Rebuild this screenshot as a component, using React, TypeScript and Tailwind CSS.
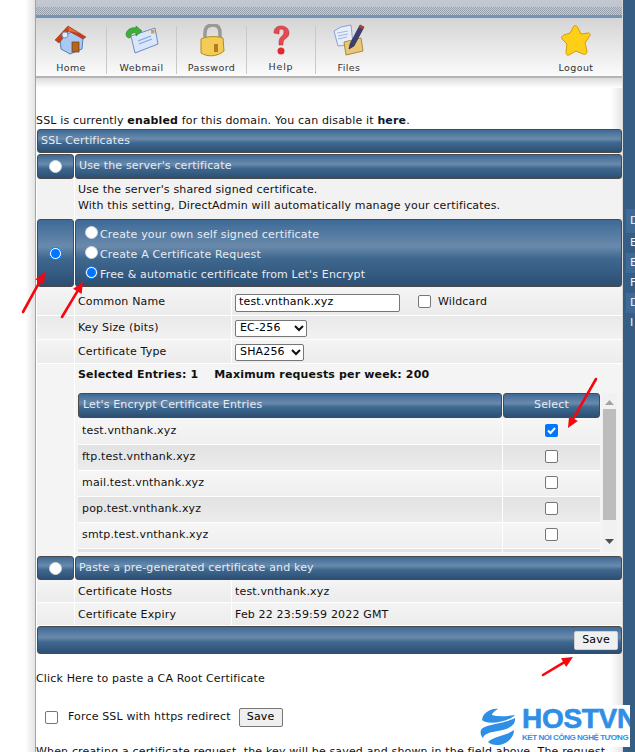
const bar = "bg-[linear-gradient(#3d6a97_0%,#6a8aab_40%,#3f6890_58%,#2c4f73_100%)] border border-[#4a4a4a] rounded-[3px] text-[#e6ecf2]";

function HomeIcon() {
  return (
    <svg width="34" height="30" viewBox="0 0 34 30">
      <path d="M6 14 L17 7 L29 13 L28 24 L16 29 L7 24 Z" fill="#a9c8f2" stroke="#5a7fb5" />
      <path d="M1 15 L14 1 L32 12 L29 14 L15 6 L5 18 Z" fill="#c8401a" stroke="#8a2a10" strokeWidth="0.5" />
      <path d="M14 2 L25 8 L15 6 Z" fill="#e2703a" />
      <circle cx="11" cy="10" r="3" fill="#dfe8f5" stroke="#7f93ad" />
      <rect x="18" y="17" width="7" height="10" fill="#b5651d" stroke="#6e3d12" strokeWidth="0.7" />
    </svg>
  );
}

function MailIcon() {
  return (
    <svg width="34" height="28" viewBox="0 0 34 28">
      <path d="M6 10 L30 2 L33 18 L10 27 Z" fill="#d9e6fb" stroke="#6d8cc4" />
      <path d="M13 15 L26 10 M14 18 L27 13" stroke="#7fa4dc" strokeWidth="1.2" />
      <rect x="26" y="4" width="3.5" height="3.5" fill="#d89a4a" />
      <path d="M1 8 C2 3 7 1 11 2 L11 0 L17 5 L11 10 L11 7 C8 6 6 7 5 12 C3 12 1 11 1 8 Z" fill="#3fae3a" stroke="#2b7d28" strokeWidth="0.6" />
    </svg>
  );
}

function LockIcon() {
  return (
    <svg width="26" height="33" viewBox="0 0 26 33">
      <path d="M6 15 V9 C6 3 9 1 14 1 C19 1 21 4 21 9 V15" fill="none" stroke="#9a9a92" strokeWidth="3.5" />
      <path d="M2 15 C8 12 18 12 24 14 L25 27 C18 33 8 33 2 29 Z" fill="#f4cb55" stroke="#b38a22" />
      <path d="M15 20 h4 v8 h-4 z" fill="#b27d1f" />
    </svg>
  );
}

function HelpIcon() {
  return (
    <svg width="18" height="30" viewBox="0 0 18 30">
      <path d="M2 8 C2 3 5 1 9 1 C14 1 17 4 17 8 C17 12 14 13 12 15 C11 16 11 18 11 20 L7 20 C7 16 7 14 9 12 C11 10 12 9 12 7 C12 5 11 4 9 4 C7 4 7 6 7 9 Z" fill="#e8484f" stroke="#b33a40" strokeWidth="0.6" />
      <circle cx="9" cy="26" r="3.5" fill="#e02a33" />
    </svg>
  );
}

function FilesIcon() {
  return (
    <svg width="32" height="32" viewBox="0 0 32 32">
      <path d="M1 7 L8 3 L18 1 L20 20 L5 22 Z" fill="#e8effb" stroke="#87a3d3" />
      <path d="M4 9 L15 7 M5 12 L15 10 M5 15 L14 13" stroke="#9db7e3" />
      <path d="M11 18 L28 14 L30 27 L13 31 Z" fill="#e8c878" stroke="#a98a3d" />
      <path d="M17 20 L27 1 L31 3 L21 22 L16 25 Z" fill="#3b3f73" stroke="#20234a" strokeWidth="0.6" />
      <path d="M26 3 L27 1 L31 3 L30 5 Z" fill="#c8401a" />
    </svg>
  );
}

function StarIcon() {
  return (
    <svg width="30" height="33" viewBox="0 0 30 33">
      <path d="M13 2 C15 1 16 2 17 4 L20 10 L27 9 C29 9 30 11 28 13 L24 19 L26 27 C26 30 24 31 22 30 L15 27 L8 31 C6 32 5 30 5 28 L6 20 L1 15 C0 13 1 12 3 11 L9 9 Z" fill="#fdd017" stroke="#d99a0c" />
    </svg>
  );
}

function NavItem({ label, icon, w, line = true, tight = false }: { label: string; icon: React.ReactNode; w: string; line?: boolean; tight?: boolean }) {
  return (
    <div className={`${w} h-[48px] flex flex-col items-center justify-end text-[#333] text-[9.5px] ${tight ? "tracking-[0.8px]" : "tracking-[0.4px]"} ${line ? "border-r border-[#c9c9c9]" : ""}`}>
      <div className="h-[36px] flex items-center justify-center -translate-y-[2px]">{icon}</div>
      <div className={`leading-[12px] ${tight ? "mb-[1px]" : "mb-0"} mt-[3px]`}>{label}</div>
    </div>
  );
}

function Radio({ on = false }: { on?: boolean }) {
  return (
    <span className={`inline-block w-[13px] h-[13px] rounded-full shrink-0 ${on ? "border-[1.5px] border-[#0075ff] bg-white p-[1px]" : "bg-white border border-[#cfd6dd]"}`}>
      {on && <span className="block w-full h-full rounded-full bg-[#0075ff]" />}
    </span>
  );
}

function Check({ on = false }: { on?: boolean }) {
  if (on) {
    return (
      <span className="w-[13px] h-[13px] rounded-[2px] bg-[#0075ff] flex items-center justify-center">
        <svg width="11" height="11" viewBox="0 0 11 11"><path d="M2 5.5 L4.5 8 L9 3" fill="none" stroke="#fff" strokeWidth="2" /></svg>
      </span>
    );
  }
  return <span className="w-[13px] h-[13px] rounded-[2px] bg-white border border-[#767676] block" />;
}

function Select({ value, w }: { value: string; w: string }) {
  return (
    <span className={`${w} h-[17px] border border-[#767676] rounded-[2px] bg-white flex items-center justify-between pl-[4px] pr-[2px] text-black`}>
      {value}
      <svg width="10" height="7" viewBox="0 0 10 7"><path d="M1 1 L5 5 L9 1" fill="none" stroke="#111" strokeWidth="2" /></svg>
    </span>
  );
}

function FormRow({ label, h, children, alt, low }: { label: string; h: string; children: React.ReactNode; alt?: boolean; low?: boolean }) {
  const cellTop = low ? "pt-[3px]" : "pt-[1px]";
  return (
    <div className={`flex ${h} border-b border-white ${alt ? "bg-[linear-gradient(#e9e9e9,#f2f2f2)]" : "bg-[linear-gradient(#f4f4f4,#ececec)]"}`}>
      <div className="w-[38px] border-r border-white" />
      <div className={`w-[157px] pl-[3px] ${cellTop} flex items-center border-r border-white`}>{label}</div>
      <div className={`flex-1 pl-[3px] ${cellTop} flex items-center`}>{children}</div>
    </div>
  );
}

function EntryRow({ name, on, alt }: { name: string; on?: boolean; alt?: boolean }) {
  return (
    <div className={`flex h-[26px] shrink-0 border-b border-white ${alt ? "bg-[linear-gradient(#e2e2e2,#ececec)]" : "bg-[linear-gradient(#f6f6f6,#efefef)]"}`}>
      <div className="w-[425px] pl-[4px] flex items-center border-r border-white">{name}</div>
      <div className="flex-1 flex items-center justify-center pb-[3px]"><Check on={on} /></div>
    </div>
  );
}

function Arrow({ className, x1, y1, x2, y2, w, h }: { className: string; x1: number; y1: number; x2: number; y2: number; w: number; h: number }) {
  const a = Math.atan2(y2 - y1, x2 - x1);
  const bx = x2 - Math.cos(a) * 11;
  const by = y2 - Math.sin(a) * 11;
  const px = -Math.sin(a) * 5;
  const py = Math.cos(a) * 5;
  return (
    <svg className={`absolute ${className}`} width={w} height={h} viewBox={`0 0 ${w} ${h}`}>
      <line x1={x1} y1={y1} x2={bx} y2={by} stroke="#f5070f" strokeWidth="2.6" strokeLinecap="round" />
      <polygon points={`${x2},${y2} ${bx + px},${by + py} ${bx - px},${by - py}`} fill="#f5070f" />
    </svg>
  );
}

export default function App() {
  return (
    <div className="relative w-[635px] h-[752px] overflow-hidden bg-white flex text-[11px] tracking-[0.16px] text-[#111] font-['DejaVu_Sans','Liberation_Sans',sans-serif]">
      <div className="w-[36px] shrink-0 bg-[linear-gradient(90deg,#fff_70%,#e4e4e4_97%,#8fa6bf_97%)]" />

      <div className="w-[586px] shrink-0 self-stretch flex flex-col overflow-visible bg-[linear-gradient(90deg,#fff_98%,#e6e6e6)]">
        <div className="h-[18px] shrink-0 bg-[linear-gradient(#c3c7d0,#bcc1cb)] flex flex-col justify-end">
          <div className="h-[8px] bg-[repeating-conic-gradient(#98a1ae_0_25%,#c3c7d0_0_50%)] bg-[length:2px_2px]" />
          <div className="h-[3px] bg-[#7294b8]" />
        </div>

        <div className="h-[60px] shrink-0 bg-[linear-gradient(#d4d4d4,#fbfbfb)] border-b-2 border-[#b4b4b4] flex items-center pt-[5px]">
          <NavItem label="Home" icon={<HomeIcon />} w="w-[71px]" />
          <NavItem label="Webmail" icon={<MailIcon />} w="w-[70px]" />
          <NavItem label="Password" icon={<LockIcon />} w="w-[70px]" />
          <NavItem label="Help" icon={<HelpIcon />} w="w-[69px]" tight />
          <NavItem label="Files" icon={<FilesIcon />} w="w-[66px]" line={false} />
          <div className="flex-1" />
          <NavItem label="Logout" icon={<StarIcon />} w="w-[40px]" line={false} />
          <div className="w-[26px]" />
        </div>

        <div className="h-[10px] shrink-0 bg-[linear-gradient(#dcdcdc,#fff)]" />

        <div className="pt-[25px] h-[41px] shrink-0 leading-[16px] whitespace-nowrap">
          SSL is currently <b>enabled</b> for this domain. You can disable it <b className="text-[#0b1b30]">here</b>.
        </div>

        <div className="pl-[1px] shrink-0 flex flex-col">
          <div className={`${bar} h-[24px] flex items-center pl-[3px]`}>SSL Certificates</div>

          <div className="flex gap-[1px] mt-[1px] h-[25px]">
            <div className={`${bar} w-[37px] flex items-center justify-center`}><Radio /></div>
            <div className={`${bar} flex-1 flex items-center pl-[3px]`}>Use the server's certificate</div>
          </div>

          <div className="flex h-[40px] bg-[#f2f2f2]">
            <div className="w-[38px] border-r border-white" />
            <div className="pl-[3px] pt-[3px] leading-[16px]">
              <div>Use the server's shared signed certificate.</div>
              <div>With this setting, DirectAdmin will automatically manage your certificates.</div>
            </div>
          </div>

          <div className="flex gap-[1px] h-[68px]">
            <div className={`${bar} w-[37px] flex items-center justify-center`}><Radio on /></div>
            <div className={`${bar} flex-1 pl-[9px] pt-[5px] flex flex-col`}>
              <div className="h-[20px] flex items-center gap-[2px]"><span className="-mt-[5px] flex"><Radio /></span><span>Create your own self signed certificate</span></div>
              <div className="h-[20px] flex items-center gap-[2px]"><span className="-mt-[5px] flex"><Radio /></span><span>Create A Certificate Request</span></div>
              <div className="h-[20px] flex items-center gap-[2px]"><span className="-mt-[5px] flex"><Radio on /></span><span>Free &amp; automatic certificate from Let's Encrypt</span></div>
            </div>
          </div>

          <FormRow label="Common Name" h="h-[29px]" low>
            <span className="w-[165px] h-[18px] border border-[#767676] rounded-[2px] bg-white pl-[3px] flex items-center text-black">test.vnthank.xyz</span>
            <span className="ml-[18px] -mt-[2px]"><Check /></span>
            <span className="ml-[7px]">Wildcard</span>
          </FormRow>
          <FormRow label="Key Size (bits)" h="h-[24px]" alt><Select value="EC-256" w="w-[72px]" /></FormRow>
          <FormRow label="Certificate Type" h="h-[24px]"><Select value="SHA256" w="w-[69px]" /></FormRow>

          <div className="flex h-[192px] bg-[#f4f4f4]">
            <div className="w-[38px] border-r border-white" />
            <div className="flex-1 pl-[3px] min-w-0 overflow-hidden">
              <div className="h-[29px] flex items-center font-bold whitespace-pre pb-[7px]">Selected Entries: 1{"    "}Maximum requests per week: 200</div>
              <div className="flex">
                <div className="w-[522px] flex flex-col h-[159px] overflow-hidden">
                  <div className="flex gap-[1px] h-[25px] shrink-0 mb-[1px]">
                    <div className={`${bar} w-[424px] flex items-center pl-[4px]`}>Let's Encrypt Certificate Entries</div>
                    <div className={`${bar} w-[97px] flex items-center justify-center`}>Select</div>
                  </div>
                  <EntryRow name="test.vnthank.xyz" on />
                  <EntryRow name="ftp.test.vnthank.xyz" alt />
                  <EntryRow name="mail.test.vnthank.xyz" />
                  <EntryRow name="pop.test.vnthank.xyz" alt />
                  <EntryRow name="smtp.test.vnthank.xyz" />
                  <EntryRow name="" alt />
                </div>
                <div className="w-[15px] ml-[2px] h-[159px] bg-[#f1f1f1] flex flex-col items-center">
                  <svg className="mt-[7px]" width="9" height="5" viewBox="0 0 9 5"><path d="M4.5 0 L9 5 H0 Z" fill="#a3a3a3" /></svg>
                  <div className="w-[13px] h-[111px] mt-[4px] bg-[#bdbdbd]" />
                  <svg className="mt-[19px]" width="9" height="5" viewBox="0 0 9 5"><path d="M0 0 H9 L4.5 5 Z" fill="#505050" /></svg>
                </div>
              </div>
            </div>
          </div>

          <div className="flex gap-[1px] h-[24px]">
            <div className={`${bar} w-[37px] flex items-center justify-center`}><Radio /></div>
            <div className={`${bar} flex-1 flex items-center pl-[3px]`}>Paste a pre-generated certificate and key</div>
          </div>

          <FormRow label="Certificate Hosts" h="h-[23px]" low><span>test.vnthank.xyz</span></FormRow>
          <FormRow label="Certificate Expiry" h="h-[23px]" low><span>Feb 22 23:59:59 2022 GMT</span></FormRow>

          <div className={`${bar} h-[28px] flex items-center justify-end pr-[3px]`}>
            <button className="w-[44px] h-[19px] rounded-[2px] bg-[#f0f0f0] border border-[#d0d0d0] text-black">Save</button>
          </div>
        </div>

        <div className="mt-[17px] h-[16px] shrink-0 leading-[16px]">Click Here to paste a CA Root Certificate</div>

        <div className="mt-[20px] h-[20px] shrink-0 flex items-center pl-[9px]">
          <Check />
          <span className="ml-[10px]">Force SSL with https redirect</span>
          <button className="ml-[8px] w-[44px] h-[19px] rounded-[2px] bg-[#efefef] border border-[#767676] text-black">Save</button>
        </div>

        <div className="mt-[17px] shrink-0 leading-[16px] whitespace-nowrap">When creating a certificate request, the key will be saved and shown in the field above. The request</div>
      </div>

      <div className="flex-1 min-w-0 bg-[#365d84] border-l border-[#d8d8d8] pt-[209px] pl-[3px] text-[#f2f5f8] leading-[20px] overflow-hidden">
        <div className="h-[24px] pl-[4px] pt-[2px] bg-[#3f6a96]">D</div>
        <div className="h-[20px] pl-[4px]">E</div>
        <div className="h-[20px] pl-[4px] bg-[#3f6a96]">E</div>
        <div className="h-[20px] pl-[4px]">F</div>
        <div className="h-[20px] pl-[4px] bg-[#3f6a96]">D</div>
        <div className="h-[20px] pl-[4px]">I</div>
      </div>

      <Arrow className="left-[20px] top-[268px]" w={28} h={48} x1={3} y1={44} x2={25} y2={4} />
      <Arrow className="left-[58px] top-[278px]" w={28} h={42} x1={4} y1={39} x2={25} y2={4} />
      <Arrow className="left-[562px] top-[376px]" w={38} h={56} x1={34} y1={3} x2={6} y2={52} />
      <Arrow className="left-[540px] top-[654px]" w={36} h={24} x1={3} y1={21} x2={33} y2={3} />

      <div className="absolute left-[480px] top-[705px] w-[150px] h-[42px] bg-white flex items-start overflow-hidden">
        <svg width="36" height="40" viewBox="0 0 36 40" className="shrink-0 mt-[1px]">
          <path d="M2 14 C3 6 12 2 18 3 C13 6 12 8 12 9 C18 11 28 10 35 9 C30 15 8 20 2 14 Z" fill="#2f8fe6" />
          <path d="M1 24 C4 18 24 18 35 12 C36 20 28 23 18 25 C10 26 4 28 3 32 C1 30 0 27 1 24 Z" fill="#2f8fe6" />
          <path d="M8 36 C14 30 26 30 34 24 C34 32 26 39 17 39 C13 39 10 38 8 36 Z" fill="#2f8fe6" />
        </svg>
        <div className="ml-[6px] flex flex-col">
          <div className="font-['Liberation_Sans',sans-serif] font-bold text-[#2f8fe6] [-webkit-text-stroke:0.6px_#2f8fe6] text-[28px] leading-[28px] tracking-[-0.3px] whitespace-nowrap">HOSTVN</div>
          <div className="font-['Liberation_Sans',sans-serif] font-bold text-[#2f8fe6] text-[8px] leading-[9px] tracking-[-0.45px] whitespace-nowrap">KẾT NỐI CÔNG NGHỆ TƯƠNG LAI</div>
        </div>
      </div>
    </div>
  );
}
